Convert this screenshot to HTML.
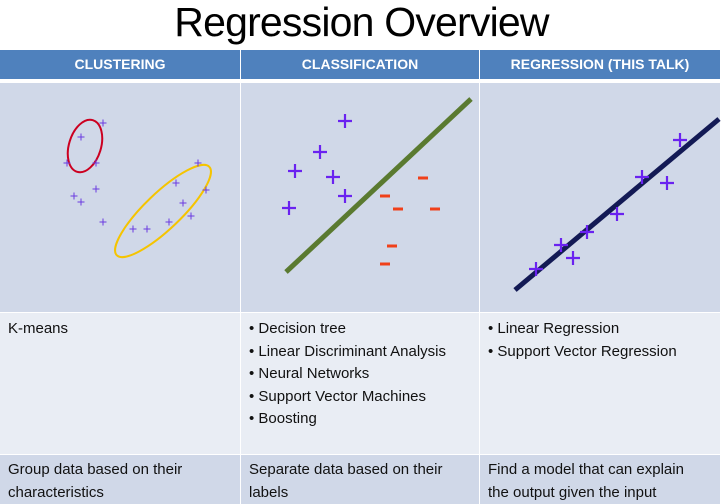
<!DOCTYPE html>
<html><head><style>
*{margin:0;padding:0;box-sizing:border-box}
body{width:723px;height:504px;background:#fff;position:relative;overflow:hidden;font-family:"Liberation Sans",sans-serif}
.t{position:absolute;left:0;width:723px;top:-2px;text-align:center;font-size:41px;line-height:48px;color:#000;letter-spacing:-0.8px}
.c{position:absolute;}
.h{background:#4f81bd;color:#fff;font-weight:bold;font-size:14px;text-align:center;line-height:29px;top:50px;height:29px}
.r1{background:#d0d8e8;top:83px;height:229px}
.r2{background:#e9edf4;top:313px;height:141px;font-size:15px;color:#111;padding:5px 8px;line-height:22.5px}
.r3{background:#d0d8e8;top:455px;height:49px;font-size:15px;color:#111;padding:4px 8px;line-height:22.5px;white-space:nowrap}
.a{left:0;width:240px}.b{left:241px;width:238px}.d{left:480px;width:240px}
</style></head><body>
<div class="t">Regression Overview</div>
<div class="c h a">CLUSTERING</div><div class="c h b">CLASSIFICATION</div><div class="c h d">REGRESSION (THIS TALK)</div>
<div class="c r1 a"></div><div class="c r1 b"></div><div class="c r1 d"></div>
<div class="c r2 a">K-means</div>
<div class="c r2 b">• Decision tree<br>• Linear Discriminant Analysis<br>• Neural Networks<br>• Support Vector Machines<br>• Boosting</div>
<div class="c r2 d">• Linear Regression<br>• Support Vector Regression</div>
<div class="c r3 a">Group data based on their<br>characteristics</div>
<div class="c r3 b">Separate data based on their<br>labels</div>
<div class="c r3 d">Find a model that can explain<br>the output given the input</div>
<svg style="position:absolute;left:0;top:0" width="723" height="504">
<defs>
<g id="s"><path d="M-3.5 0H3.5M0 -3.5V3.5" stroke="#6a3ae0" stroke-width="1"/></g>
<g id="p"><path d="M-7 0H7M0 -7V7" stroke="#6a22f0" stroke-width="2.2"/></g>
<g id="m"><path d="M-5 0H5" stroke="#f0401a" stroke-width="3"/></g>
</defs>
<ellipse cx="85" cy="146" rx="16" ry="27" transform="rotate(17 85 146)" fill="none" stroke="#cc0020" stroke-width="2"/>
<ellipse cx="163" cy="211" rx="64" ry="18" transform="rotate(-43.7 163 211)" fill="none" stroke="#f5c400" stroke-width="2"/>
<use href="#s" x="81" y="137"/><use href="#s" x="67" y="163"/><use href="#s" x="96" y="163"/><use href="#s" x="74" y="196"/><use href="#s" x="81" y="202"/><use href="#s" x="96" y="189"/><use href="#s" x="103" y="123"/><use href="#s" x="103" y="222"/>
<use href="#s" x="198" y="163"/><use href="#s" x="176" y="183"/><use href="#s" x="206" y="190"/><use href="#s" x="183" y="203"/><use href="#s" x="191" y="216"/><use href="#s" x="169" y="222"/><use href="#s" x="147" y="229"/><use href="#s" x="133" y="229"/>
<line x1="286" y1="272" x2="471" y2="99" stroke="#5a7a30" stroke-width="5"/>
<use href="#p" x="345" y="121"/><use href="#p" x="320" y="152"/><use href="#p" x="295" y="171"/><use href="#p" x="333" y="177"/><use href="#p" x="345" y="196"/><use href="#p" x="289" y="208"/>
<use href="#m" x="423" y="178"/><use href="#m" x="385" y="196"/><use href="#m" x="398" y="209"/><use href="#m" x="435" y="209"/><use href="#m" x="392" y="246"/><use href="#m" x="385" y="264"/>
<line x1="515" y1="290" x2="719" y2="119" stroke="#131a55" stroke-width="5"/>
<use href="#p" x="680" y="140"/><use href="#p" x="642" y="177"/><use href="#p" x="667" y="183"/><use href="#p" x="617" y="214"/><use href="#p" x="587" y="232"/><use href="#p" x="561" y="245"/><use href="#p" x="573" y="258"/><use href="#p" x="536" y="269"/>
</svg>
</body></html>
